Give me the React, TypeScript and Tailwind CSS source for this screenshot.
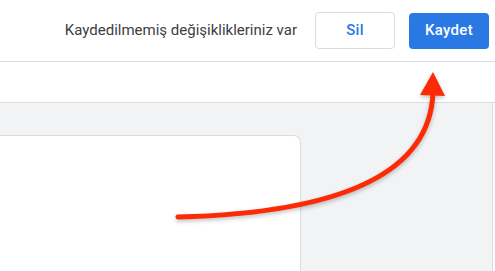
const font = { fontFamily: "Roboto, 'Noto Sans', sans-serif" };

function Arrow() {
  return (
    <svg
      className="pointer-events-none absolute left-0 top-0"
      width="495"
      height="271"
      viewBox="0 0 495 271"
      style={{ filter: "drop-shadow(0px 2px 2px rgba(0,0,0,0.25))" }}
    >
      <path
        d="M178 217 C 300 214, 430 190, 433 92"
        fill="none"
        stroke="#fc2a05"
        strokeWidth="5"
        strokeLinecap="round"
      />
      <polygon points="433,72 445,96 420,95" fill="#fc2a05" />
    </svg>
  );
}

export default function App() {
  return (
    <div className="relative h-[271px] w-[495px] overflow-hidden bg-white" style={font}>
      {/* header */}
      <div className="flex h-[62px] items-center justify-end border-b border-[#dadce0] pr-[6px]">
        <span className="text-[15px] text-[#3c4043]">Kaydedilmemiş değişiklikleriniz var</span>
        <button className="ml-[18px] h-[37px] w-[80px] rounded-[4px] border border-[#dadce0] bg-white text-[15px] font-medium tracking-[0.2px] text-[#2a78e4]">
          Sil
        </button>
        <button className="ml-[14px] h-[36px] w-[80px] rounded-[4px] bg-[#2a78e4] text-[15px] font-medium tracking-[0.3px] text-white">
          Kaydet
        </button>
      </div>

      {/* toolbar strip */}
      <div className="h-[41px] border-b border-[#dadce0]" />

      {/* body */}
      <div className="flex h-[200px]">
        <div className="w-[493px] border-r border-[#dadce0] bg-[#f1f3f4] pt-[32px]">
          <div className="h-full w-[301px] rounded-tr-[7px] border-t border-r border-[#dadce0] bg-white" />
        </div>
        <div className="flex-1 bg-white" />
      </div>

      <Arrow />
    </div>
  );
}
